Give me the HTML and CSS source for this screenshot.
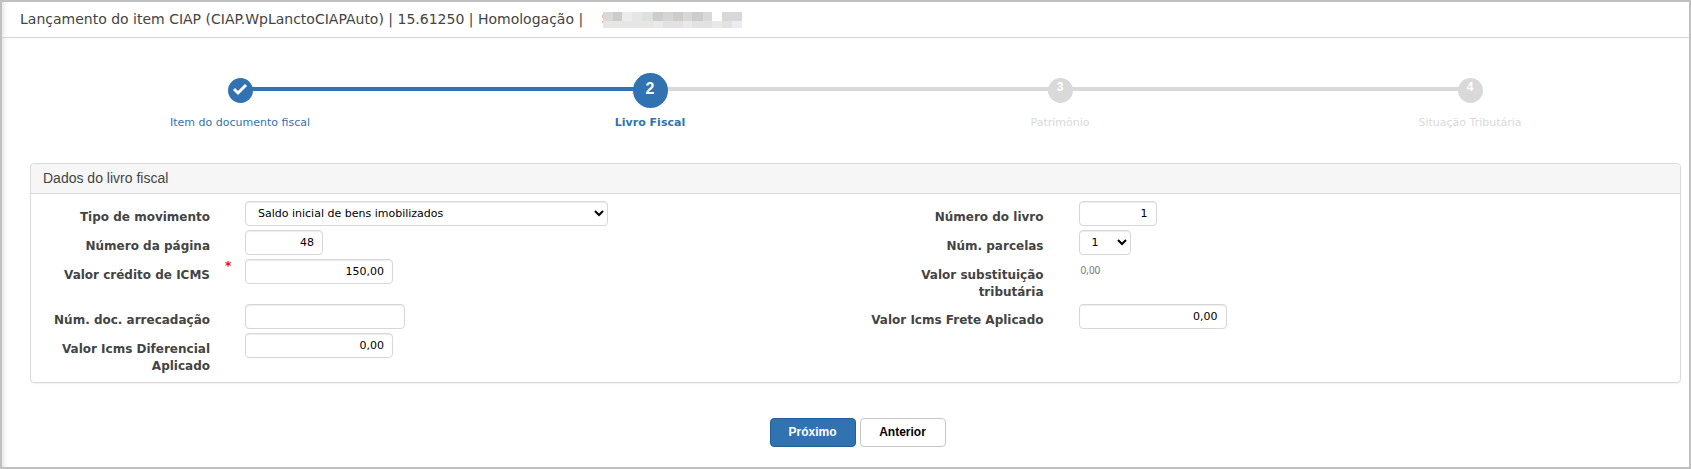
FILE: index.html
```html
<!DOCTYPE html>
<html lang="pt-BR">
<head>
    <meta charset="UTF-8">
    <meta name="viewport" content="width=device-width, initial-scale=1.0">
    <title>Lançamento do item CIAP</title>
    <link rel="stylesheet" href="styles.css">
</head>
<body>

    <!-- Title Bar -->
    <header class="title-bar">
        <h1>Lançamento do item CIAP (CIAP.WpLanctoCIAPAuto) | 15.61250 | Homologação |</h1>
        <svg class="masked-name" width="141" height="16" viewBox="-1 0 141 16" shape-rendering="crispEdges" aria-hidden="true">
            <path fill="#e0b896" d="M-1 3h1v3h-1zM-1 9h1v2h-1z"/>
            <path fill="#d8d8d8" d="M0 0h10v9H0zM80 0h9v9h-9zM100 0h9v9h-9zM119 0h20v9h-20z"/>
            <path fill="#cdcccb" d="M10 0h9v9h-9zM50 0h10v9H50zM70 0h10v9H70zM89 0h11v9H89z"/>
            <path fill="#ebecef" d="M19 0h10v9H19z"/>
            <path fill="#e6e6e5" d="M29 0h10v9H29zM0 9h50v7H0z"/>
            <path fill="#dfe0e0" d="M39 0h11v9H39z"/>
            <path fill="#d5d5d6" d="M60 0h10v9H60z"/>
            <path fill="#e2e2e2" d="M60 9h20v7H60zM89 9h20v7H89zM119 9h10v7h-10z"/>
            <path fill="#e9e9e9" d="M50 9h10v7H50zM80 9h9v7h-9zM109 9h10v7h-10z"/>
            <path fill="#ebecf2" d="M129 9h10v7h-10z"/>
        </svg>
    </header>

    <main>
        <!-- Wizard Steps -->
        <ol class="steps">
            <li class="step done">
                <span class="circle">
                    <svg width="15" height="15" viewBox="0 0 15 15" aria-hidden="true">
                        <path d="M1 7l4 4 8-8" fill="none" stroke="#fff" stroke-width="3"/>
                    </svg>
                </span>
                <span class="step-label">Item do documento fiscal</span>
            </li>
            <li class="step active">
                <span class="circle">2</span>
                <span class="step-label">Livro Fiscal</span>
            </li>
            <li class="step">
                <span class="circle">3</span>
                <span class="step-label">Patrimônio</span>
            </li>
            <li class="step">
                <span class="circle">4</span>
                <span class="step-label">Situação Tributária</span>
            </li>
        </ol>

        <form>
            <!-- Book Data -->
            <section class="panel">
                <h2>Dados do livro fiscal</h2>
                <div class="fields">
                    <div class="field">
                        <label for="tipo">Tipo de movimento</label>
                        <select id="tipo" class="wide">
                            <option>Saldo inicial de bens imobilizados</option>
                        </select>
                    </div>
                    <div class="field">
                        <label for="livro">Número do livro</label>
                        <input id="livro" class="short" type="text" value="1">
                    </div>
                    <div class="field">
                        <label for="pagina">Número da página</label>
                        <input id="pagina" class="short" type="text" value="48">
                    </div>
                    <div class="field">
                        <label for="parcelas">Núm. parcelas</label>
                        <select id="parcelas" class="tiny">
                            <option>1</option>
                        </select>
                    </div>
                    <div class="field required">
                        <label for="credito">Valor crédito de ICMS</label>
                        <input id="credito" class="money" type="text" value="150,00" required>
                    </div>
                    <div class="field">
                        <label for="substituicao">Valor substituição tributária</label>
                        <output id="substituicao">0,00</output>
                    </div>
                    <div class="field">
                        <label for="arrecadacao">Núm. doc. arrecadação</label>
                        <input id="arrecadacao" class="document" type="text">
                    </div>
                    <div class="field">
                        <label for="frete">Valor Icms Frete Aplicado</label>
                        <input id="frete" class="money" type="text" value="0,00">
                    </div>
                    <div class="field">
                        <label for="diferencial">Valor Icms Diferencial Aplicado</label>
                        <input id="diferencial" class="money" type="text" value="0,00">
                    </div>
                </div>
            </section>

            <div class="actions">
                <button type="submit" class="btn primary">Próximo</button>
                <button type="button" class="btn">Anterior</button>
            </div>
        </form>
    </main>

</body>
</html>
```
FILE: styles.css
```css
* {
    margin: 0;
    padding: 0;
    box-sizing: border-box;
}

body {
    min-height: 100vh;
    font-family: Verdana, "DejaVu Sans", sans-serif;
    color: #444;
    background-color: #fff;
    border: 2px solid #c0c0c0;
    box-shadow: inset 6px 0 6px -5px #ddd;
}

/* Title Bar */
.title-bar {
    display: flex;
    align-items: flex-start;
    gap: 19px;
    height: 36px;
    padding: 0 18px;
    border-bottom: 1px solid #d7d7d7;
}

.masked-name {
    margin-top: 10px;
}

h1 {
    font-size: 14px;
    font-weight: normal;
    line-height: 34px;
}

/* Wizard Steps */
.steps {
    display: flex;
    list-style: none;
    padding: 35px 14px 0 33px;
}

.step {
    flex: 1;
    position: relative;
    text-align: center;
    font-size: 11px;
    line-height: 15px;
    color: #d9d9d9;
}

/* Line from the previous circle to this one */
.step + .step::before {
    content: "";
    position: absolute;
    top: 14px;
    right: 50%;
    width: 100%;
    height: 4px;
    background-color: #d9d9d9;
}

.step.active::before {
    background-color: #3173b0;
}

.circle {
    display: block;
    position: relative;
    z-index: 1;
    width: 25px;
    height: 25px;
    margin: 5px auto;
    border-radius: 50%;
    background-color: #d9d9d9;
    color: #fff;
    font-family: Arial, "Liberation Sans", sans-serif;
    font-size: 12px;
    font-weight: bold;
    line-height: 18px;
}

.circle svg {
    display: block;
    margin: 0 auto;
    padding-top: 4px;
    box-sizing: content-box;
}

.step-label {
    display: block;
    margin-top: 12px;
}

.done,
.active {
    color: #3173b0;
}

.done .circle,
.active .circle {
    background-color: #3173b0;
}

.active .circle {
    width: 35px;
    height: 35px;
    margin: 0 auto;
    font-size: 16px;
    line-height: 31px;
}

.active .step-label {
    margin-top: 7px;
    font-weight: bold;
}

/* Panel */
.panel {
    margin: 33px 8px 0 28px;
    border: 1px solid #d9d9d9;
    border-radius: 4px;
    box-shadow: 0 1px 1px rgba(0,0,0,0.05);
}

h2 {
    padding: 0 12px;
    border-bottom: 1px solid #d9d9d9;
    border-radius: 4px 4px 0 0;
    background-color: #f6f6f6;
    font-family: Arial, "Liberation Sans", sans-serif;
    font-size: 14px;
    font-weight: normal;
    line-height: 29px;
}

.fields {
    display: grid;
    grid-template-columns: 1fr 1fr;
    column-gap: 18px;
    row-gap: 4px;
    padding: 7px 0 8px;
}

.field {
    position: relative;
    display: flex;
    align-items: flex-start;
    gap: 35px;
}

.field label {
    width: 179px;
    margin-bottom: -1px;
    padding-top: 8px;
    font-size: 12px;
    font-weight: bold;
    line-height: 17px;
    text-align: right;
}

.required::before {
    content: "*";
    position: absolute;
    top: 0;
    left: 194px;
    color: #f00;
    font-size: 12px;
    font-weight: bold;
}

input,
select {
    height: 25px;
    border: 1px solid #d7d7d7;
    border-radius: 4px;
    background-color: #fff;
    box-shadow: inset 0 1px 1px rgba(0,0,0,0.075);
    color: #000;
    font-family: Verdana, "DejaVu Sans", sans-serif;
    font-size: 11px;
}

input {
    padding: 0 8px;
    text-align: right;
}

select {
    padding-left: 8px;
}

.wide {
    width: 363px;
}

.short {
    width: 78px;
}

.tiny {
    width: 52px;
}

.money {
    width: 148px;
}

.document {
    width: 160px;
}

output {
    padding: 5px 2px;
    color: #777;
    font-family: "Noto Sans", sans-serif;
    font-size: 10px;
    line-height: 12px;
}

/* Buttons */
.actions {
    display: flex;
    justify-content: center;
    gap: 4px;
    padding: 35px 8px 20px 32px;
}

.btn {
    width: 86px;
    height: 29px;
    padding-bottom: 2px;
    border: 1px solid #c6c6c6;
    border-radius: 4px;
    background-color: #fff;
    color: #000;
    font-family: Arial, "Liberation Sans", sans-serif;
    font-size: 12px;
    font-weight: bold;
    cursor: pointer;
}

.primary {
    border-color: #1f5f9c;
    background-color: #3173b0;
    color: #fff;
}
```
